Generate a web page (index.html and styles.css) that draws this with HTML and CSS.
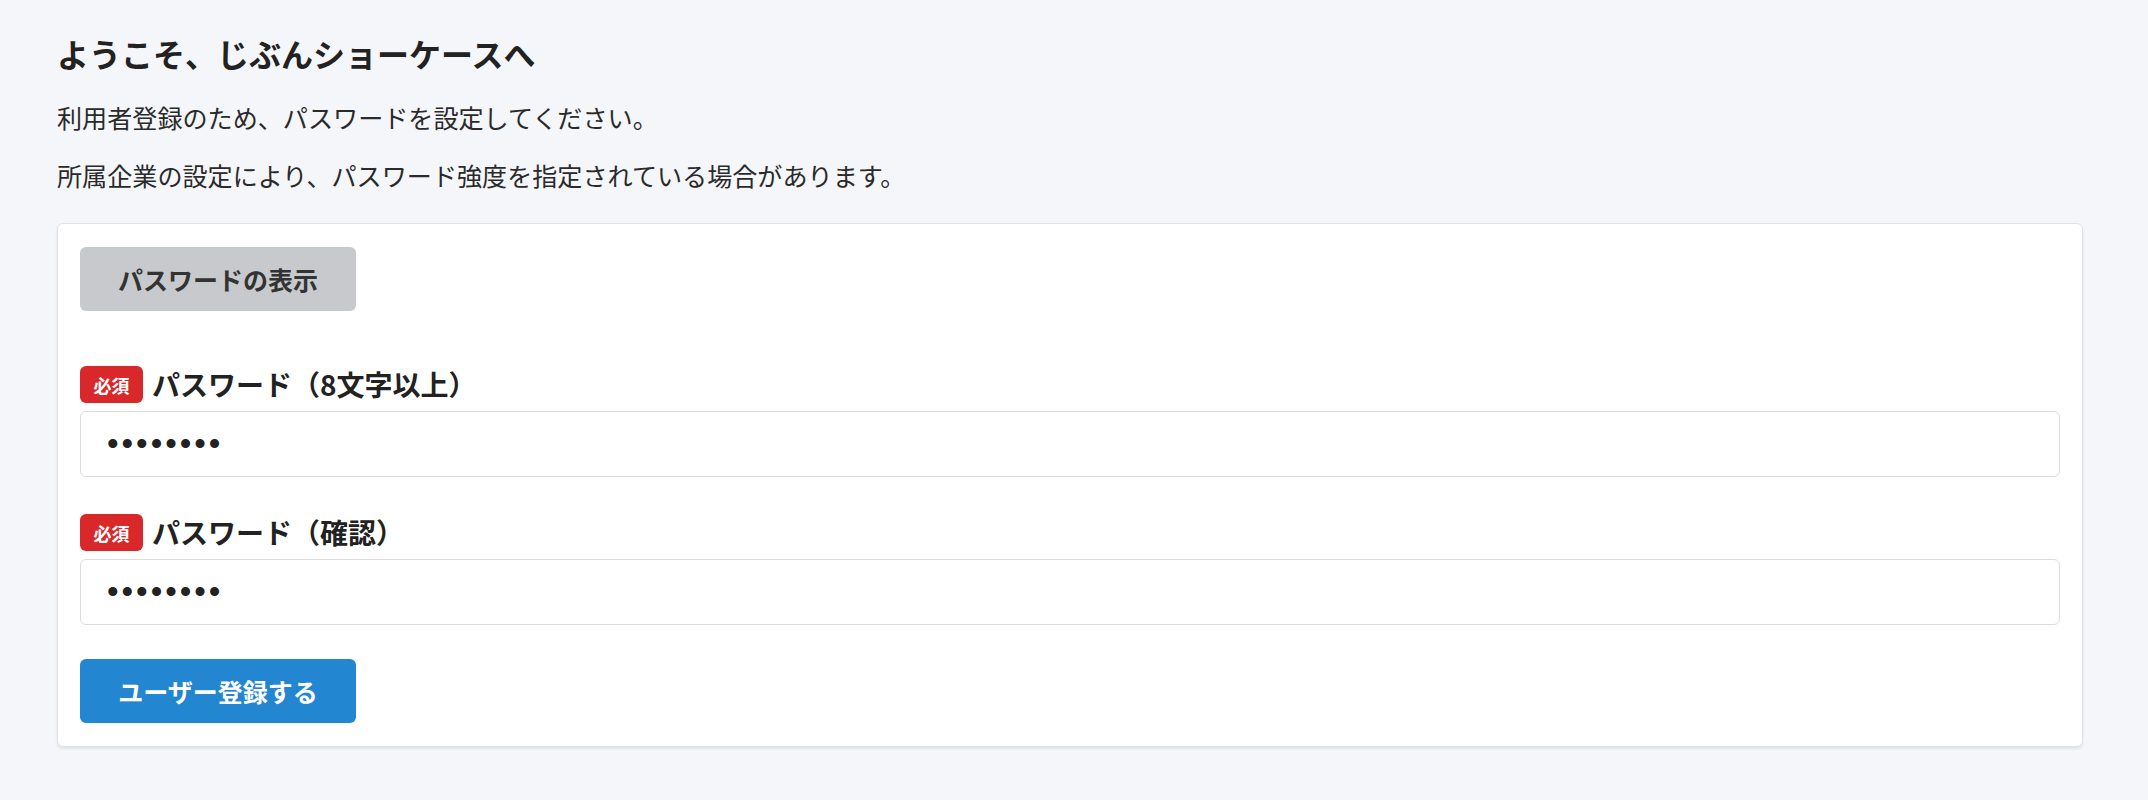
FILE: index.html
```html
<!DOCTYPE html>
<html lang="ja">
<head>
<meta charset="utf-8">
<title>ようこそ、じぶんショーケースへ</title>
<link rel="stylesheet" href="styles.css">
</head>
<body>
<main class="page">
  <h1 class="title">ようこそ、じぶんショーケースへ</h1>
  <p class="lead">利用者登録のため、パスワードを設定してください。</p>
  <p class="lead">所属企業の設定により、パスワード強度を指定されている場合があります。</p>
  <form class="card">
    <button type="button" class="btn btn-gray">パスワードの表示</button>
    <div class="field field-first">
      <label class="field-label" for="pw1"><span class="badge">必須</span><span class="label-text">パスワード（8文字以上）</span></label>
      <input class="input" id="pw1" type="password" value="password">
    </div>
    <div class="field">
      <label class="field-label" for="pw2"><span class="badge">必須</span><span class="label-text">パスワード（確認）</span></label>
      <input class="input" id="pw2" type="password" value="password">
    </div>
    <button type="submit" class="btn btn-blue">ユーザー登録する</button>
  </form>
</main>
</body>
</html>
```
FILE: styles.css
```css
* { box-sizing: border-box; }
html, body { margin: 0; }
body {
  background: #f5f6fa;
  color: #222;
  font-family: "Noto Sans CJK JP", "Noto Sans", sans-serif;
}
.page {
  padding: 29px 65px 40px 57px;
}
.title {
  margin: 0;
  font-size: 32px;
  line-height: 48px;
  font-weight: 700;
  color: #222;
}
.lead {
  margin: 22px 0 0;
  font-size: 25.1px;
  line-height: 36px;
  font-weight: 400;
  color: #2a2a2a;
}
.card {
  margin-top: 30px;
  background: #fff;
  border: 1px solid #e1e2e5;
  border-radius: 6px;
  box-shadow: 0 2px 3px rgba(0, 0, 0, 0.08);
  padding: 23px 22px 23px 22px;
  display: flex;
  flex-direction: column;
  align-items: flex-start;
}
.btn {
  width: 276px;
  height: 64px;
  border: none;
  border-radius: 6px;
  font-family: inherit;
  font-size: 25px;
  font-weight: 700;
  padding: 0;
  cursor: pointer;
}
.btn-gray {
  background: #c8c9cc;
  color: #333;
}
.btn-blue {
  margin-top: 34px;
  background: #2386d0;
  color: #fff;
}
.field {
  align-self: stretch;
  display: flex;
  flex-direction: column;
  gap: 8px;
  margin-top: 37px;
}
.field-first {
  margin-top: 55px;
}
.field-label {
  display: flex;
  align-items: center;
  gap: 9px;
  height: 37px;
}
.badge {
  display: inline-flex;
  align-items: center;
  justify-content: center;
  width: 63px;
  height: 37px;
  border-radius: 6px;
  background: #d9282a;
  color: #fff;
  font-size: 18px;
  font-weight: 700;
}
.label-text {
  font-size: 28px;
  line-height: 37px;
  font-weight: 700;
  color: #222;
}
.input {
  width: 100%;
  height: 66px;
  border: 1px solid #dcdcdf;
  border-radius: 6px;
  background: #fff;
  padding: 0 26px;
  font-family: "Liberation Sans", sans-serif;
  font-size: 33px;
  letter-spacing: 3px;
  color: #222;
  outline: none;
}
```
